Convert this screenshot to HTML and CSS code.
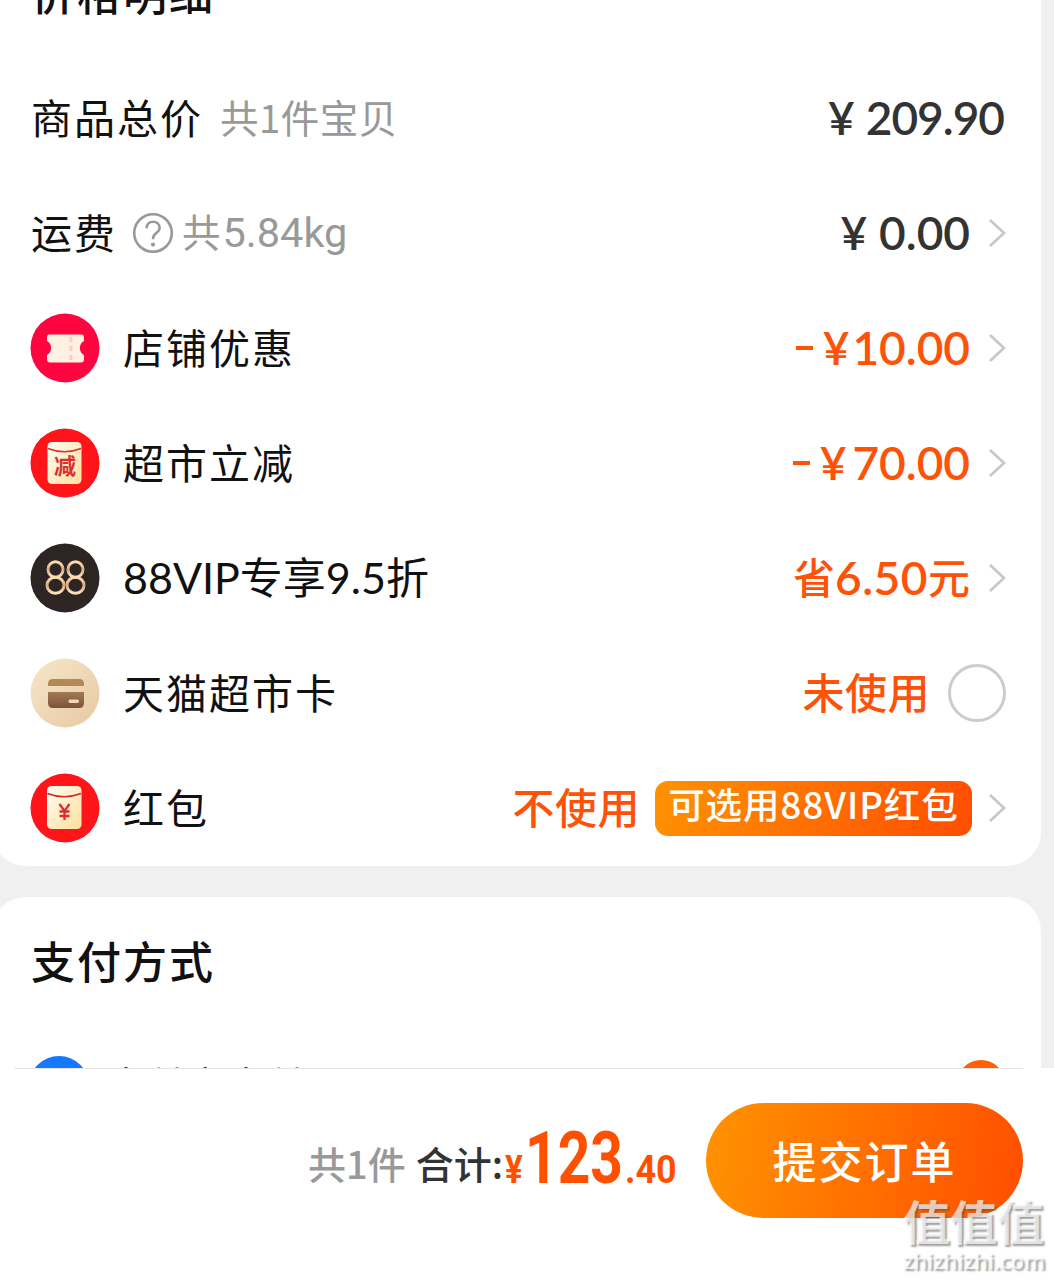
FILE: index.html
```html
<!DOCTYPE html>
<html lang="zh-CN">
<head>
<meta charset="utf-8">
<title>确认订单</title>
<link rel="stylesheet" href="styles.css">
</head>
<body>
<main class="content">
  <section class="card">
    <h2 class="card-title title-cut">价格明细</h2>
    <div class="row">
      <span class="label">商品总价</span><span class="note note-goods">共1件宝贝</span>
      <span class="amount total"><span class="yen">¥</span>209.90</span>
    </div>
    <div class="row">
      <span class="label">运费</span>
      <svg class="help" viewBox="0 0 42 42"><circle cx="21" cy="21" r="18.8"/><path d="M14.6 16.2c0-4 2.800-6.500 6.500-6.500s6.500 2.600 6.500 6.100c0 5.200-6.500 5.400-6.500 10.500v1"/><circle class="dot" cx="21" cy="32.600" r="2.100"/></svg>
      <span class="note">共<span class="kg">5.84kg</span></span>
      <span class="amount"><span class="yen">¥</span>0.00</span>
      <svg class="chevron" viewBox="0 0 18 32"><path d="M2 3l14 13L2 29"/></svg>
    </div>
    <div class="row">
      <svg class="icon" viewBox="0 0 70 70"><circle cx="35" cy="35" r="34.500" fill="#ff0540"/><path d="M19 21.500h32.500q2.500 0 2.500 2.500v4a8 8 0 0 0 0 14v4.500q0 3-3 3H20q-3 0-3-3V42a8 8 0 0 0 0-14v-3.500q0-3 2-3z" fill="#fff0e4"/><path d="M41 24v23" stroke="#ffc9c6" stroke-width="3" stroke-dasharray="5 4"/></svg>
      <span class="label item">店铺优惠</span>
      <span class="amount sale shop"><span class="minus"></span><span class="yen">¥</span>10.00</span>
      <svg class="chevron" viewBox="0 0 18 32"><path d="M2 3l14 13L2 29"/></svg>
    </div>
    <div class="row">
      <svg class="icon" viewBox="0 0 70 70"><defs><linearGradient id="paper" x2="1" y2="1"><stop stop-color="#fffdf3"/><stop offset="1" stop-color="#ffdf9d"/></linearGradient></defs><circle cx="35" cy="35" r="34.500" fill="#ff1519"/><rect x="17.500" y="14" width="34" height="42" rx="4.500" fill="url(#paper)"/><path d="M18 20.500q16.500 6.500 33 0" fill="none" stroke="#d93232" stroke-width="1.500"/><text class="icon-sale" x="35" y="46" text-anchor="middle">减</text></svg>
      <span class="label item">超市立减</span>
      <span class="amount sale"><span class="minus"></span><span class="yen">¥</span>70.00</span>
      <svg class="chevron" viewBox="0 0 18 32"><path d="M2 3l14 13L2 29"/></svg>
    </div>
    <div class="row">
      <svg class="icon" viewBox="0 0 70 70"><defs><linearGradient id="gold" x2="0" y2="1"><stop stop-color="#ffdcb0"/><stop offset=".5" stop-color="#d8aa80"/><stop offset="1" stop-color="#ffe2bc"/></linearGradient></defs><circle cx="35" cy="35" r="34.500" fill="#2c2524"/><g fill="none" stroke="url(#gold)" stroke-width="3"><ellipse cx="25.500" cy="26.500" rx="7.500" ry="7.800"/><ellipse cx="25.500" cy="42.300" rx="8.500" ry="8"/><ellipse cx="45.500" cy="26.500" rx="7.500" ry="7.800"/><ellipse cx="45.500" cy="42.300" rx="8.500" ry="8"/></g></svg>
      <span class="label item vip">88VIP专享9.5折</span>
      <span class="amount sale save">省<b>6.50</b>元</span>
      <svg class="chevron" viewBox="0 0 18 32"><path d="M2 3l14 13L2 29"/></svg>
    </div>
    <div class="row">
      <svg class="icon" viewBox="0 0 70 70"><defs><linearGradient id="sand" x2="1" y2="1"><stop stop-color="#f8e7c9"/><stop offset="1" stop-color="#e5c8a2"/></linearGradient><linearGradient id="wallet" x2="0" y2="1"><stop stop-color="#a27a54"/><stop offset="1" stop-color="#7d5339"/></linearGradient></defs><circle cx="35" cy="35" r="34.500" fill="url(#sand)"/><path d="M18 28v-2q0-5 5-5h26q5 0 5 5v2z" fill="#b18a59"/><path d="M18 34h36v11q0 5-5 5H23q-5 0-5-5z" fill="url(#wallet)"/><rect x="38.500" y="41.500" width="10.500" height="3.500" rx="1.700" fill="#f3d7b5"/></svg>
      <span class="label item">天猫超市卡</span>
      <span class="amount sale state">未使用</span>
      <span class="radio"></span>
    </div>
    <div class="row">
      <svg class="icon" viewBox="0 0 70 70"><circle cx="35" cy="35" r="34.500" fill="#ff1519"/><rect x="17" y="13" width="34.500" height="43" rx="4.500" fill="url(#paper)"/><path d="M17.500 20.500q16.500 6.500 33.500 0" fill="none" stroke="#c82b2b" stroke-width="1.700"/><path d="M29.500 31l5 7 5-7M34.500 38v9M29.500 38.500h10M29.500 43h10" fill="none" stroke="#d92f34" stroke-width="2.300"/></svg>
      <span class="label item">红包</span>
      <span class="amount sale state">不使用</span>
      <span class="badge">可选用88VIP红包</span>
      <svg class="chevron" viewBox="0 0 18 32"><path d="M2 3l14 13L2 29"/></svg>
    </div>
  </section>
  <section class="card payment">
    <h2 class="card-title">支付方式</h2>
    <div class="pay-row"><span class="alipay"></span><span class="pay-name">支付宝支付</span><span class="selected"></span></div>
  </section>
</main>
<footer class="footer">
  <div class="checkout">
    <span class="count">共1件</span><span class="sum">合计:</span>
    <span class="price"><span class="price-yen">¥</span><span class="price-main">123</span><span class="price-cents">.40</span></span>
    <button class="submit">提交订单</button>
  </div>
  <div class="watermark"><span class="mark-top">值值值</span><span class="mark-url">zhizhizhi.com</span></div>
</footer>
</body>
</html>
```
FILE: styles.css
```css
* { box-sizing: border-box; }
body {
  margin: 0;
  width: 1054px;
  height: 1280px;
  overflow: hidden;
  background: #f0f0f0;
  color: #111;
  font-family: "Noto Sans CJK SC", sans-serif;
}
.content { height: 1068px; overflow: hidden; }
.card {
  width: 1049px;
  height: 866px;
  margin-left: -8px;
  padding: 0 35px 0 38px;
  background: #fff;
  border-radius: 0 0 34px 34px;
  overflow: hidden;
}
.card-title {
  margin: 0;
  height: 60px;
  line-height: 55px;
  padding-left: 1px;
  font-size: 44px;
  font-weight: 500;
  letter-spacing: 2px;
}
.title-cut { margin: -35px 0 35px; }
.row { height: 115px; display: flex; align-items: center; white-space: nowrap; }
.row:last-child { padding-top: 1px; }
.label { font-size: 41px; letter-spacing: 2px; line-height: 60px; margin-left: 1px; padding-bottom: 4px; }
.item { margin-left: 23px; }
.vip { font-family: Lato, "Noto Sans CJK SC", sans-serif; font-size: 43px; letter-spacing: 0; padding-bottom: 0; }
.note { color: #999; font-size: 38.5px; letter-spacing: 2px; line-height: 60px; padding-bottom: 3px; }
.note-goods { margin-left: 17px; letter-spacing: .5px; }
.kg { font-family: Roboto, sans-serif; font-size: 41.5px; letter-spacing: 0; }
.help { width: 42px; height: 42px; margin: 0 8px 0 15px; fill: none; stroke: #999; stroke-width: 2.6; }
.help .dot { fill: #999; stroke: none; }
.amount {
  display: flex;
  align-items: center;
  margin-left: auto;
  color: #333;
  font-family: Lato, "Noto Sans CJK SC", sans-serif;
  font-size: 46px;
  font-weight: 600;
  line-height: 60px;
}
.total { letter-spacing: -1px; margin-right: 2px; }
.yen { margin-right: 12px; }
.sale { color: #ff5209; }
.sale .yen { margin-right: 6px; }
.shop .yen { margin-right: 3px; }
.minus { width: 17px; height: 4px; margin-right: 10px; background: currentColor; }
.save, .state { font-family: "Noto Sans CJK SC", sans-serif; font-size: 42px; font-weight: 500; padding-bottom: 4px; }
.state { letter-spacing: .5px; }
.save b { font-family: Lato, sans-serif; font-size: 46px; font-weight: 600; letter-spacing: .5px; padding-top: 4px; }
.chevron { width: 18px; height: 32px; margin-left: 18px; fill: none; stroke: #c8c8c8; stroke-width: 2.8; }
.icon { width: 70px; height: 70px; flex: none; }
.icon-sale { fill: #d92f34; font-size: 22px; font-weight: 700; }
.radio { width: 58px; height: 58px; margin-left: 18px; border: 3px solid #ccc; border-radius: 50%; }
.badge {
  width: 317px;
  height: 55px;
  margin: 1px 0 0 15px;
  border-radius: 13px;
  background: linear-gradient(105deg, #ff9200, #ff4d00);
  color: #fff;
  font-size: 36.5px;
  font-weight: 500;
  letter-spacing: 1px;
  line-height: 46px;
  text-align: center;
}
.badge + .chevron { margin-left: 16px; }
.payment { margin-top: 31px; padding-top: 36px; border-radius: 34px 34px 0 0; }
.pay-row { display: flex; align-items: center; height: 62px; margin-top: 63px; }
.alipay { width: 60px; height: 60px; margin: 0 1px 2px -1px; border-radius: 50%; background: #1677ff; }
.pay-name { margin-left: 17px; padding-bottom: 8px; font-size: 38px; letter-spacing: 2px; line-height: 60px; color: #333; }
.selected { width: 48px; height: 48px; margin: 0 1px 6px auto; border-radius: 50%; background: #ff6000; }
.footer { position: relative; height: 212px; background: #fff; }
.checkout { height: 150px; margin: 0 31px 0 14px; padding-top: 34px; border-top: 1px solid #e6e6e6; display: flex; justify-content: flex-end; }
.count, .sum { font-size: 38px; line-height: 60px; padding-top: 30px; font-weight: 500; }
.count { color: #999; margin-right: 10px; }
.sum { color: #333; }
.price { display: flex; align-items: baseline; width: 171px; margin-left: 2px; color: #ff5000; font-family: Roboto, sans-serif; font-weight: 700; line-height: 112px; }
.price span { flex: none; transform-origin: left; }
.price-main { width: 100px; font-size: 72px; transform: scaleX(.79); }
.price-yen, .price-cents { font-size: 39px; }
.price-yen { width: 20px; transform: scaleX(.85); }
.price-cents { width: 51px; transform: scaleX(.92); }
.submit {
  width: 317px;
  height: 115px;
  margin-left: 30px;
  padding: 0 0 2px;
  border: 0;
  border-radius: 58px;
  background: linear-gradient(100deg, #ff9300, #ff4e00);
  color: #fff;
  font-family: inherit;
  font-size: 44px;
  font-weight: 500;
  letter-spacing: 2px;
}
.watermark {
  position: absolute;
  right: 9px;
  top: 124px;
  width: 142px;
  display: flex;
  flex-direction: column;
  color: rgba(255, 255, 255, .7);
  text-shadow: 2px 2px 2px rgba(80, 80, 80, .55);
}
.mark-top { font-size: 47px; font-weight: 700; line-height: 56px; }
.mark-url { font-family: "Open Sans", sans-serif; font-size: 21.8px; font-weight: 600; line-height: 26px; }
```
